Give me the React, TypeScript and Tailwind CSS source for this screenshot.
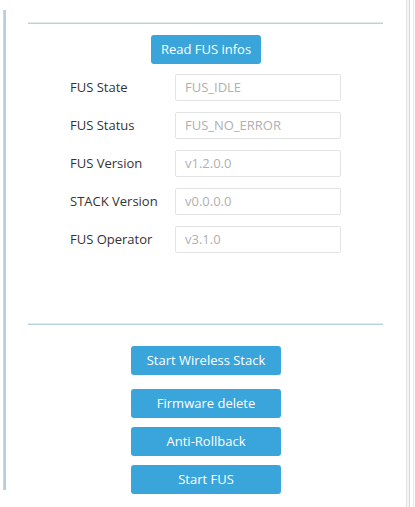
import React from "react";

const font = { fontFamily: '"Open Sans", "Noto Sans", sans-serif' };

const fields = [
  { label: "FUS State", value: "FUS_IDLE" },
  { label: "FUS Status", value: "FUS_NO_ERROR" },
  { label: "FUS Version", value: "v1.2.0.0" },
  { label: "STACK Version", value: "v0.0.0.0" },
  { label: "FUS Operator", value: "v3.1.0" },
];

const actions = ["Start Wireless Stack", "Firmware delete", "Anti-Rollback", "Start FUS"];

function Divider() {
  return (
    <div className="ml-[22px] w-[355px]">
      <div className="h-px bg-[#dfe9ef]" />
      <div className="h-px bg-[#b9d3df]" />
    </div>
  );
}

function BlueButton({ label, className }: { label: string; className: string }) {
  return (
    <button
      className={`flex items-center justify-center rounded-[3px] bg-[#3aa5da] text-[13px] text-white ${className}`}
    >
      {label}
    </button>
  );
}

export default function App() {
  return (
    <div className="relative flex h-[507px] w-[415px] overflow-hidden bg-white text-[#333]" style={font}>
      {/* left panel rule */}
      <div className="ml-[3px] mt-[10px] flex h-[480px] w-[3px]">
        <div className="w-px bg-[#c9d6de]" />
        <div className="w-[2px] bg-[#b6cfdd]" />
      </div>

      <div className="flex w-[400px] flex-col">
        <div className="mt-[22px]">
          <Divider />
        </div>

        <div className="mt-[11px] flex justify-center">
          <BlueButton label="Read FUS infos" className="h-[29px] w-[110px]" />
        </div>

        <div className="mt-[10px] flex flex-col gap-[11px]">
          {fields.map((f) => (
            <div key={f.label} className="flex items-center">
              <span className="ml-[64px] w-[105px] text-[13px] text-[#333]">{f.label}</span>
              <div className="flex h-[27px] w-[166px] items-center rounded-[2px] border border-[#e3e3e3] px-[9px] text-[13px] text-[#b0b0b0]">
                {f.value}
              </div>
            </div>
          ))}
        </div>

        <div className="mt-[70px]">
          <Divider />
        </div>

        <div className="mt-[21px] flex flex-col items-center gap-[9px]">
          {actions.map((a, i) => (
            <BlueButton key={a} label={a} className={`h-[29px] w-[150px] ${i === 1 ? "mt-[5px]" : ""}`} />
          ))}
        </div>
      </div>

      {/* right window edge */}
      <div className="flex h-full">
        <div className="w-px bg-[#e4e4e4]" />
        <div className="w-[2px] bg-[#f4f4f4]" />
        <div className="w-px bg-[#d8d8d8]" />
        <div className="w-[3px] bg-white" />
        <div className="w-px bg-[#e8e8e8]" />
      </div>
    </div>
  );
}
